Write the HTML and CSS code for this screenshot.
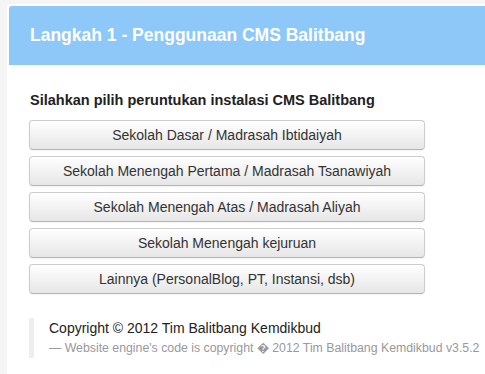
FILE: index.html
```html
<!DOCTYPE html>
<html lang="id">
<head>
    <meta charset="UTF-8">
    <meta name="viewport" content="width=device-width, initial-scale=1.0">
    <title>Instalasi CMS Balitbang</title>
    <link rel="stylesheet" href="styles.css">
</head>
<body>
    <div class="panel">
        <div class="panel-header">
            <h1>Langkah 1 - Penggunaan CMS Balitbang</h1>
        </div>
        <div class="panel-body">
            <h4>Silahkan pilih peruntukan instalasi CMS Balitbang</h4>
            <div class="choices">
                <button type="button" class="btn">Sekolah Dasar / Madrasah Ibtidaiyah</button>
                <button type="button" class="btn">Sekolah Menengah Pertama / Madrasah Tsanawiyah</button>
                <button type="button" class="btn">Sekolah Menengah Atas / Madrasah Aliyah</button>
                <button type="button" class="btn">Sekolah Menengah kejuruan</button>
                <button type="button" class="btn">Lainnya (PersonalBlog, PT, Instansi, dsb)</button>
            </div>
            <blockquote class="footer-quote">
                <p>Copyright &copy; 2012 Tim Balitbang Kemdikbud</p>
                <small>&mdash; Website engine's code is copyright &#xFFFD; 2012 Tim Balitbang Kemdikbud v3.5.2</small>
            </blockquote>
        </div>
    </div>
</body>
</html>
```

FILE: styles.css
```css
/* Umum */
body {
    margin: 0;
    padding: 0;
    background: #f5f5f5;
    font-family: "Liberation Sans", Arial, sans-serif;
    color: #333;
    overflow: hidden;
    height: 374px;
}

.panel {
    margin: 4px 0 0 7px;
    padding: 2px 0 0 2px;
    background: #fff;
    border-radius: 4px 0 0 0;
    height: 368px;
}

.panel-header {
    background: #8ec8f8;
    border-radius: 3px 0 0 0;
    height: 59px;
    padding-left: 21px;
    display: flex;
    align-items: center;
}

.panel-header h1 {
    margin: 0;
    font-size: 17.5px;
    font-weight: bold;
    color: #fff;
}

.panel-body {
    padding: 25px 0 0 20px;
}

.panel-body h4 {
    margin: 0 0 10px 1px;
    font-size: 14.5px;
    font-weight: bold;
    color: #222;
    line-height: 20px;
}

.choices {
    display: flex;
    flex-direction: column;
    gap: 6px;
    width: 396px;
}

.btn {
    height: 30px;
    padding: 0 12px;
    font-family: "Liberation Sans", Arial, sans-serif;
    font-size: 14px;
    color: #333;
    text-align: center;
    background: linear-gradient(to bottom, #ffffff, #e6e6e6);
    border: 1px solid #cccccc;
    border-bottom-color: #b3b3b3;
    border-radius: 4px;
    box-shadow: inset 0 1px 0 rgba(255, 255, 255, 0.2), 0 1px 2px rgba(0, 0, 0, 0.05);
    cursor: pointer;
}

.btn:hover {
    background: #e6e6e6;
}

.footer-quote {
    margin: 24px 0 0 0;
    padding: 0 0 0 15px;
    border-left: 5px solid #eeeeee;
}

.footer-quote p {
    margin: 0;
    font-size: 14px;
    line-height: 20px;
    color: #222;
}

.footer-quote small {
    display: block;
    font-size: 12.3px;
    line-height: 20px;
    color: #999;
}
```
